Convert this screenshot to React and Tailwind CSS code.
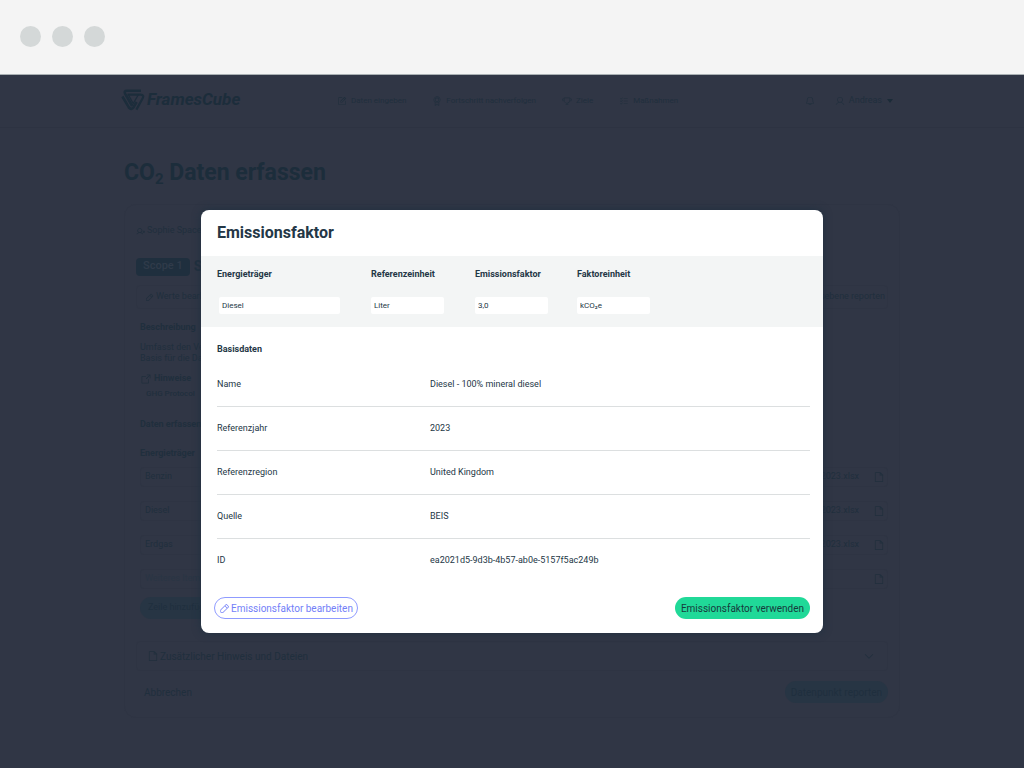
import { useId } from "react";
import { PiBell, PiUser, PiTrophy, PiListChecks, PiNotePencil, PiFile, PiPencilSimple, PiUserGear } from "react-icons/pi";
import { PiArrowSquareOut, PiCaretDown, PiMedal } from "react-icons/pi";

const navItems = [
  { label: "Daten eingeben", Icon: PiNotePencil },
  { label: "Fortschritt nachverfolgen", Icon: PiMedal },
  { label: "Ziele", Icon: PiTrophy },
  { label: "Maßnahmen", Icon: PiListChecks },
];

const sources = [
  { name: "Benzin", file: "Benzin_2023.xlsx" },
  { name: "Diesel", file: "Diesel_2023.xlsx" },
  { name: "Erdgas", file: "Erdgas_2023.xlsx" },
  { name: "Weiteres Item", file: "" },
];

const details = [
  ["Name", "Diesel - 100% mineral diesel"],
  ["Referenzjahr", "2023"],
  ["Referenzregion", "United Kingdom"],
  ["Quelle", "BEIS"],
  ["ID", "ea2021d5-9d3b-4b57-ab0e-5157f5ac249b"],
];

function WindowBar() {
  return (
    <div className="flex h-[75px] shrink-0 items-center gap-[11px] border-b border-[#a9b0b3] bg-[#f4f4f4] px-5 pb-[2px]">
      <span className="size-[21px] rounded-full bg-[#d4d8d8]" />
      <span className="size-[21px] rounded-full bg-[#d4d8d8]" />
      <span className="size-[21px] rounded-full bg-[#d4d8d8]" />
    </div>
  );
}

function Logo() {
  return (
    <a href="#" className="flex items-center gap-[2px] pb-[2px] text-[17px] font-bold italic text-[#1c2d3b]">
      <svg viewBox="0 0 24 22" className="h-[22px] w-6" fill="none" stroke="currentColor" strokeWidth="2.6" strokeLinejoin="round">
        <path d="M20 1.800H6Q2.600 1.800 4.200 4.800L11.200 17" />
        <path d="M1.400 7.500L8 18.600Q10.300 21.400 12.600 18.200L15.600 13" />
        <path d="M6.500 5.600H19.500Q23.400 5.800 21.800 9L15.400 20.600" strokeWidth="2.200" />
        <path d="M7.500 6L12.200 14.500L17.200 6" strokeWidth="1.300" />
      </svg>
      FramesCube
    </a>
  );
}

function TopNav() {
  return (
    <header className="border-b border-[#2d3342]">
      <div className="mx-auto flex h-[52px] w-full max-w-[782px] items-center justify-between">
        <Logo />
        <nav className="flex items-center gap-[26px] text-[8px]">
          {navItems.map(({ label, Icon }) => (
            <a key={label} href="#" className="flex items-center gap-1">
              <Icon className="size-[10px]" />
              {label}
            </a>
          ))}
        </nav>
        <div className="flex items-center gap-5 pl-[30px] pr-[10px] text-[9px]">
          <button type="button" aria-label="Benachrichtigungen">
            <PiBell className="size-[10px]" />
          </button>
          <button type="button" className="flex items-center gap-1">
            <PiUser className="size-[10px]" />
            Andreas
            <svg viewBox="0 0 6 4" className="ml-px h-1 w-[6px]" fill="#1b2b38">
              <path d="M0 0h6L3 4z" />
            </svg>
          </button>
        </div>
      </div>
    </header>
  );
}

function DataCard() {
  return (
    <section className="flex flex-col rounded-xl border border-[#2e3443] px-[11px] pb-[14px] text-[9px]">
      <div className="flex h-[52px] items-center gap-[2px] text-[9px]">
        <PiUserGear className="size-[9px]" />
        Sophie Space
      </div>
      <div className="flex h-[19px] items-center gap-1">
        <span className="flex h-[18px] items-center rounded bg-[#1f2f3e] px-[7px] text-[11px] font-medium text-[#303b4a]">Scope 1</span>
        <h2 className="text-[14px] font-bold">S1</h2>
      </div>
      <div className="mt-[9px] flex h-6 items-center justify-between rounded border border-[#2e3443] pl-2 pr-[2px]">
        <button type="button" className="flex items-center gap-[2px]">
          <PiPencilSimple className="size-[9px]" />
          Werte bearbeiten
        </button>
        <span>Auf Standortsebene reporten</span>
      </div>
      <div className="flex flex-col pl-1">
        <h3 className="mt-2 h-5 text-[9px]/[20px] font-bold">Beschreibung</h3>
        <p className="mt-[5px] text-[9px]/[11px]">
          Umfasst den Verbrauch
          <br />
          Basis für die Daten
        </p>
        <a href="#" className="mt-2 flex h-[14px] items-center gap-[2px] text-[9px] font-bold">
          <PiArrowSquareOut className="size-3" />
          Hinweise
        </a>
        <a href="#" className="h-4 pl-[6px] text-[8px]/[16px] font-medium">GHG Protocol</a>
        <h3 className="mt-[10px] h-6 text-[9px]/[24px] font-bold">Daten erfassen</h3>
        <table className="mt-[10px] w-full">
          <thead>
            <tr>
              <th className="p-0 text-left text-[9px]/[14px] font-bold">Energieträger</th>
              <th aria-label="Datei" className="p-0" />
            </tr>
          </thead>
          <tbody>
            {sources.map(({ name, file }) => (
              <tr key={name}>
                <td className="h-[34px] p-0 align-middle">
                  <div className="flex h-5 items-center rounded-l-sm border-y border-l border-[#2e3443] px-1">
                    <span className={file ? "" : "text-[#293544]"}>{name}</span>
                  </div>
                </td>
                <td className="h-[34px] p-0 align-middle">
                  <div className="flex h-5 items-center justify-end gap-[14px] rounded-r-sm border-y border-r border-[#2e3443] pr-[2px]">
                    {file}
                    <PiFile className="size-3" />
                  </div>
                </td>
              </tr>
            ))}
          </tbody>
        </table>
        <button type="button" className="mt-[1px] h-[22px] self-start rounded-full bg-[#273544] px-2 text-[9px] text-[#1f2f3e]">
          Zeile hinzufügen
        </button>
      </div>
      <button type="button" className="mt-[22px] flex h-[30px] items-center rounded border border-[#2e3443] pl-[10px] pr-3 text-[10px]">
        <PiFile className="mr-px size-3" />
        Zusätzlicher Hinweis und Dateien
        <PiCaretDown className="ml-auto size-3" />
      </button>
      <div className="mt-[10px] flex items-center justify-between pl-2 text-[10px]">
        <button type="button">Abbrechen</button>
        <button type="button" className="h-[22px] rounded-full bg-[#273544] px-[6px] text-[#1f2f3e]">Datenpunkt reporten</button>
      </div>
    </section>
  );
}

function Field({ label, value, inputClass }) {
  const id = useId();
  return (
    <div>
      <label htmlFor={id} className="block h-5 text-[9px]/[20px] font-bold">{label}</label>
      <input
        id={id}
        defaultValue={value}
        className={`mt-[13px] block h-[17px] rounded-xs bg-white px-[3px] text-[8px] outline-none ${inputClass}`}
      />
    </div>
  );
}

function FactorDialog() {
  return (
    <div role="dialog" aria-labelledby="dialog-title" className="w-full max-w-[622px] overflow-hidden rounded-lg bg-white text-[#243746] shadow-[0_0_8px_#1f3040]">
      <h2 id="dialog-title" className="px-4 text-[16px]/[46px] font-bold">Emissionsfaktor</h2>
      <div className="grid h-[71px] grid-cols-[154px_104px_102px_1fr] bg-[#f3f5f5] px-4 pt-2">
        <Field label="Energieträger" value="Diesel" inputClass="ml-[2px] w-[121px]" />
        <Field label="Referenzeinheit" value="Liter" inputClass="w-[73px]" />
        <Field label="Emissionsfaktor" value="3,0" inputClass="w-[73px]" />
        <Field label="Faktoreinheit" value="kCO₂e" inputClass="w-[73px]" />
      </div>
      <div className="pl-4 pr-[13px] text-[9px]">
        <h3 className="pt-3 text-[9px]/[20px] font-bold">Basisdaten</h3>
        <dl className="mt-1 divide-y divide-[#dcdfe0]">
          {details.map(([term, value]) => (
            <div key={term} className="grid h-11 grid-cols-[213px_1fr] items-center">
              <dt>{term}</dt>
              <dd>{value}</dd>
            </div>
          ))}
        </dl>
      </div>
      <div className="mt-[14px] flex items-center justify-between px-[13px] pb-[14px] text-[10px]">
        <button type="button" className="flex h-[22px] items-center gap-px rounded-full border border-[#8f9bff] px-1 text-[#7380f8]">
          <PiPencilSimple className="size-[11px]" />
          Emissionsfaktor bearbeiten
        </button>
        <button type="button" className="h-[22px] rounded-full bg-[#20d998] px-[6px] text-[#173a3c]">Emissionsfaktor verwenden</button>
      </div>
    </div>
  );
}

export default function App() {
  return (
    <div className="flex min-h-screen flex-col font-['Roboto',sans-serif]">
      <WindowBar />
      <main className="relative flex-1 bg-[#303645] text-[#202f3d]">
        <TopNav />
        <div className="mx-auto w-full max-w-[776px]">
          <h1 className="pt-[27px] text-[23px]/9 font-bold text-[#1c2d3b]">
            CO<sub className="text-[15px]">2</sub> Daten erfassen
          </h1>
          <div className="mt-[13px]">
            <DataCard />
          </div>
        </div>
        <div className="absolute inset-0 flex items-center justify-center">
          <FactorDialog />
        </div>
      </main>
    </div>
  );
}
